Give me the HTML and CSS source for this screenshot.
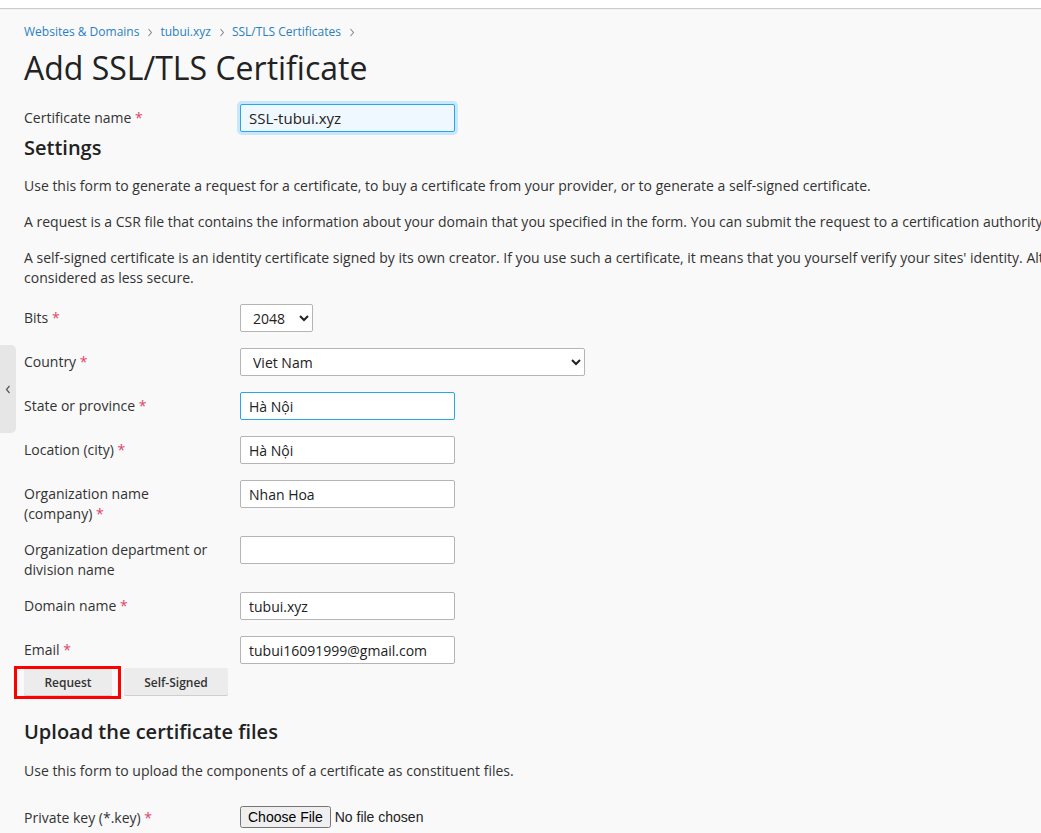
FILE: index.html
```html
<!DOCTYPE html>
<html lang="en">
<head>
<meta charset="utf-8">
<title>Add SSL/TLS Certificate</title>
<link rel="stylesheet" href="styles.css">
</head>
<body>
<div class="topbar"></div>
<div class="side-tab"><svg width="6" height="9" viewBox="0 0 6 9"><path d="M4.5 1 L1.5 4.5 L4.5 8" fill="none" stroke="#555" stroke-width="1.2"/></svg></div>
<main class="page">
  <nav class="crumbs">
    <a href="#">Websites &amp; Domains</a><span class="sep"><svg width="6" height="9" viewBox="0 0 6 9"><path d="M1.5 1 L4.5 4.5 L1.5 8" fill="none" stroke="#888" stroke-width="1.1"/></svg></span>
    <a href="#">tubui.xyz</a><span class="sep"><svg width="6" height="9" viewBox="0 0 6 9"><path d="M1.5 1 L4.5 4.5 L1.5 8" fill="none" stroke="#888" stroke-width="1.1"/></svg></span>
    <a href="#">SSL/TLS Certificates</a><span class="sep"><svg width="6" height="9" viewBox="0 0 6 9"><path d="M1.5 1 L4.5 4.5 L1.5 8" fill="none" stroke="#888" stroke-width="1.1"/></svg></span>
  </nav>
  <h1 class="title">Add SSL/TLS Certificate</h1>

  <div class="row row-name">
    <label class="lbl">Certificate name <span class="req">*</span></label>
    <div class="fld"><input class="inp inp-focus" type="text" value="SSL-tubui.xyz"></div>
  </div>

  <h2 class="sec sec-settings">Settings</h2>
  <p class="txt">Use this form to generate a request for a certificate, to buy a certificate from your provider, or to generate a self-signed certificate.</p>
  <p class="txt">A request is a CSR file that contains the information about your domain that you specified in the form. You can submit the request to a certification authority for issuing you a certificate.</p>
  <p class="txt">A self-signed certificate is an identity certificate signed by its own creator. If you use such a certificate, it means that you yourself verify your sites' identity. Although self-signed certificates are free, they are considered as less secure.</p>

  <div class="rows">
    <div class="row">
      <label class="lbl">Bits <span class="req">*</span></label>
      <div class="fld"><select class="sel sel-bits"><option>2048</option></select></div>
    </div>
    <div class="row">
      <label class="lbl">Country <span class="req">*</span></label>
      <div class="fld"><select class="sel sel-country"><option>Viet Nam</option></select></div>
    </div>
    <div class="row">
      <label class="lbl">State or province <span class="req">*</span></label>
      <div class="fld"><input class="inp inp-active" type="text" value="Hà Nội"></div>
    </div>
    <div class="row">
      <label class="lbl">Location (city) <span class="req">*</span></label>
      <div class="fld"><input class="inp" type="text" value="Hà Nội"></div>
    </div>
    <div class="row">
      <label class="lbl">Organization name (company) <span class="req">*</span></label>
      <div class="fld"><input class="inp" type="text" value="Nhan Hoa"></div>
    </div>
    <div class="row">
      <label class="lbl">Organization department or division name</label>
      <div class="fld"><input class="inp" type="text" value=""></div>
    </div>
    <div class="row">
      <label class="lbl">Domain name <span class="req">*</span></label>
      <div class="fld"><input class="inp" type="text" value="tubui.xyz"></div>
    </div>
    <div class="row">
      <label class="lbl">Email <span class="req">*</span></label>
      <div class="fld"><input class="inp" type="text" value="tubui16091999@gmail.com"></div>
    </div>
  </div>

  <div class="actions">
    <span class="marked"><button class="btn btn-request" type="button">Request</button></span>
    <button class="btn btn-self" type="button">Self-Signed</button>
  </div>

  <h2 class="sec sec-upload">Upload the certificate files</h2>
  <p class="txt">Use this form to upload the components of a certificate as constituent files.</p>

  <div class="row row-file">
    <label class="lbl">Private key (*.key) <span class="req">*</span></label>
    <div class="fld"><input class="file" type="file"></div>
  </div>
</main>
</body>
</html>
```

FILE: styles.css
```css
html {
  overflow: hidden;
  background: #f9f9f9;
}
body {
  margin: 0;
  font-family: "Open Sans", "Noto Sans", sans-serif;
  color: #222;
  background: #f9f9f9;
  width: 1460px;
}
.topbar {
  height: 8px;
  background: #fff;
  box-shadow: 0 1px 1px rgba(0,0,0,0.18);
  position: relative;
  z-index: 1;
}
.side-tab {
  position: absolute;
  left: 0;
  top: 345px;
  width: 16px;
  height: 88px;
  background: #e6e6e6;
  border-radius: 0 5px 5px 0;
  display: flex;
  align-items: center;
  justify-content: center;
}
.page {
  padding: 0 0 0 24px;
  width: 1358px;
}
.crumbs {
  margin-top: 16px;
  font-size: 12px;
  line-height: 16px;
  display: flex;
  align-items: center;
}
.crumbs a {
  color: #2a7fc0;
  text-decoration: none;
}
.crumbs .sep {
  display: inline-flex;
  margin: 0 7px 0 8px;
}
.title {
  margin: 8px 0 0;
  font-size: 32px;
  font-weight: 400;
  line-height: 40px;
  color: #222;
}
.row {
  display: flex;
  align-items: flex-start;
}
.lbl {
  width: 190px;
  padding-right: 26px;
  padding-top: 4px;
  font-size: 14px;
  line-height: 20px;
  color: #333;
  flex: none;
}
.req {
  color: #e0436a;
}
.fld {
  padding-bottom: 4px;
}
.row-name {
  margin-top: 16px;
}
.inp {
  box-sizing: border-box;
  width: 215px;
  height: 28px;
  border: 1px solid #b5b5b5;
  border-radius: 2px;
  background: #fff;
  padding: 0 8px;
  font-family: "Open Sans", "Noto Sans", sans-serif;
  font-size: 14px;
  color: #222;
  outline: none;
  margin: 0;
  display: block;
}
.inp-focus {
  border-color: #28a8e0;
  background: #eff8fe;
  box-shadow: 0 0 0 3px #c9e7fa;
  font-size: 15px;
}
.inp-active {
  border-color: #28a8e0;
}
.sel {
  box-sizing: border-box;
  height: 28px;
  border: 1px solid #b5b5b5;
  border-radius: 2px;
  background: #fff;
  font-family: "Open Sans", "Noto Sans", sans-serif;
  font-size: 14px;
  color: #222;
  padding: 0 4px 0 8px;
  margin: 0;
  display: block;
}
.sel-bits {
  width: 73px;
}
.sel-country {
  width: 345px;
}
.sec {
  font-size: 20px;
  font-weight: 600;
  line-height: 24px;
  margin: 0;
  color: #222;
}
.sec-settings {
  margin-top: 0;
}
.txt {
  font-size: 14px;
  line-height: 20px;
  margin: 16px 0 0;
  color: #333;
}
.rows {
  margin-top: 16px;
  display: flex;
  flex-direction: column;
  gap: 12px;
}
.actions {
  display: flex;
  gap: 12px;
}
.marked {
  position: relative;
  display: inline-flex;
}
.marked::after {
  content: "";
  position: absolute;
  left: -10px;
  right: -9px;
  top: -2px;
  bottom: -3px;
  border: 3px solid #f00;
}
.btn {
  height: 28px;
  padding: 0 20px;
  border: none;
  border-radius: 2px;
  background: #ececec;
  box-shadow: inset 0 -1px 0 #cfcfcf;
  font-family: "Open Sans", "Noto Sans", sans-serif;
  font-size: 12px;
  font-weight: 600;
  color: #333;
  margin: 0;
}
.btn-request {
  width: 88px;
}
.btn-self {
  width: 104px;
}
.sec-upload {
  margin-top: 24px;
}
.sec-upload + .txt {
  margin-top: 17px;
}
.row-file {
  margin-top: 23px;
}
.file {
  margin-top: 2px;
  font-family: "Liberation Sans", Arial, sans-serif;
  font-size: 14px;
  color: #222;
}
```
